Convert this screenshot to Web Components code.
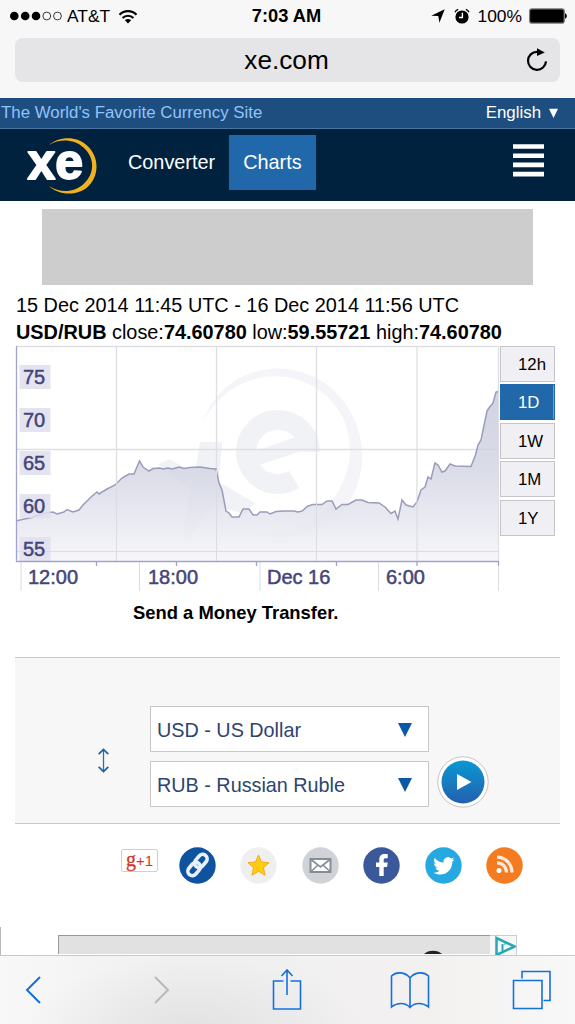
<!DOCTYPE html>
<html lang="en">
<head>
<meta charset="utf-8">
<title>xe.com</title>
<style>
  html, body {
    margin: 0;
    height: 100%;
  }

  body {
    --navy: #01223f;
    --blue: #2068a9;
    --ios-blue: #1670dc;
    display: flex;
    flex-direction: column;
    height: 1024px;
    overflow: hidden;
    background: #fff;
    color: #000;
    font-family: "Liberation Sans", Arial, sans-serif;
  }

  main {
    flex: 1;
    min-height: 0;
    overflow: hidden;
  }
</style>
</head>
<body>
<phone-status></phone-status>
<address-bar>xe.com</address-bar>
<site-header></site-header>
<main>
  <rate-summary></rate-summary>
  <rate-chart></rate-chart>
  <transfer-link>Send a Money Transfer.</transfer-link>
  <currency-form>
    <currency-select>USD - US Dollar</currency-select>
    <currency-select>RUB - Russian Ruble</currency-select>
  </currency-form>
  <share-row></share-row>
  <bottom-ad></bottom-ad>
</main>
<phone-toolbar></phone-toolbar>

<script>
class BaseElement extends HTMLElement {
  constructor() {
    super();
    this.attachShadow({ mode: "open" });
  }

  connectedCallback() {
    this.shadowRoot.innerHTML = this.render();
  }
}

class PhoneStatus extends BaseElement {
  render() {
    return `
      <style>
        :host {
          display: grid;
          grid-template-columns: 1fr auto 1fr;
          align-items: center;
          height: 32px;
          flex: none;
          padding: 0 8px 0 10px;
          background: #f7f7f7;
          font-size: 17.4px;
          white-space: nowrap;
        }
        div { display: flex; align-items: center; }
        .right { justify-content: flex-end; }
        .carrier { margin: 0 8px 0 5px; }
        .time { padding-right: 4px; font-size: 18.3px; font-weight: bold; }
        .level { margin: 0 7px 0 8px; }
        .clock { margin-left: 9px; }
        svg { display: block; }
      </style>
      <div>
        <svg width="52" height="10" viewBox="0 0 52 10">
          <circle cx="4.3" cy="5" r="4.3"/><circle cx="15.2" cy="5" r="4.3"/><circle cx="26" cy="5" r="4.3"/>
          <g fill="none" stroke="#222" stroke-width=".9"><circle cx="36.8" cy="5" r="3.9"/><circle cx="47.5" cy="5" r="3.9"/></g>
        </svg>
        <span class="carrier">AT&amp;T</span>
        <svg width="20" height="15" viewBox="0 0 20 15">
          <g fill="none" stroke="#000" stroke-width="2.2"><path d="M1.5 5.7a12 12 0 0 1 17 0"/><path d="M4.6 9a7.6 7.6 0 0 1 10.8 0"/></g>
          <path d="M10 14.4 6.9 11.2a4.4 4.4 0 0 1 6.2 0z"/>
        </svg>
      </div>
      <div class="time">7:03 AM</div>
      <div class="right">
        <svg width="14" height="14" viewBox="0 0 14 14"><path d="M13.7.3 8.4 13.7 7.3 7 .2 6.7z"/></svg>
        <svg class="clock" width="16" height="16" viewBox="0 0 16 16">
          <circle cx="8" cy="9" r="6.6"/>
          <path d="M1 4.3A5 5 0 0 1 4.2 1.3M15 4.3a5 5 0 0 0-3.2-3" fill="none" stroke="#000" stroke-width="1.3"/>
          <path d="M8.4 4.8v4.7H5" fill="none" stroke="#fff" stroke-width="1.4"/>
        </svg>
        <span class="level">100%</span>
        <svg width="38" height="16" viewBox="0 0 38 16">
          <rect x=".6" y=".9" width="34.6" height="14.2" rx="2.2" fill="#000" stroke="#777" stroke-width="1.2"/>
          <path d="M36 5.2c2.4.8 2.4 4.8 0 5.6z"/>
        </svg>
      </div>
    `;
  }
}

class AddressBar extends BaseElement {
  render() {
    return `
      <style>
        :host {
          display: block;
          height: 66px;
          flex: none;
          box-sizing: border-box;
          padding: 6px 15px 0;
          background: #f7f7f7;
        }
        .field {
          display: grid;
          grid-template-columns: 1fr auto 1fr;
          align-items: center;
          height: 44px;
          border-radius: 8px;
          background: #e5e5e7;
          font-size: 26.2px;
        }
        .url { grid-column: 2; padding-right: 2px; }
        svg { justify-self: end; margin-right: 12px; }
      </style>
      <div class="field">
        <span class="url"><slot></slot></span>
        <svg width="22" height="24" viewBox="0 0 22 24">
          <path d="M12.5 3.8H11A9 9 0 1 0 20 13.4" fill="none" stroke="#000" stroke-width="2.2"/>
          <path d="M11 .2 18.8 4.4 11 8z"/>
        </svg>
      </div>
    `;
  }
}

class SiteHeader extends BaseElement {
  render() {
    return `
      <style>
        :host { display: block; flex: none; color: #fff; }
        .tagline {
          display: flex;
          justify-content: space-between;
          align-items: center;
          height: 30px;
          padding: 0 17px 0 1px;
          border-bottom: 1px solid #4a75a0;
          background: #1e4e80;
          font-size: 16.85px;
        }
        .tagline > span:first-child { color: #8fc3fa; }
        .lang { display: flex; align-items: center; gap: 8px; }
        nav {
          display: flex;
          align-items: center;
          height: 72px;
          padding-right: 30px;
          background: var(--navy);
          font-size: 19.85px;
        }
        a { display: flex; align-items: center; height: 55px; padding: 0 14px; margin-bottom: 6px; }
        a.on { background: var(--blue); }
        .logo { width: 114px; height: 72px; overflow: visible; }
        .menu { margin: 0 1px 9px auto; }
      </style>
      <div class="tagline">
        <span>The World's Favorite Currency Site</span>
        <span class="lang">English
          <svg width="9" height="10" viewBox="0 0 9 10"><path d="M0 .8h9L4.5 10z" fill="#fff"/></svg>
        </span>
      </div>
      <nav>
        <svg class="logo" viewBox="0 0 114 72">
          <path d="M49 16C58 8 76 6 87 16.500C100 28 99.500 48 87 58.500C76 67.500 58 66 49 57C60 64 74 64 83.500 55C95 45 95 29 84 19C74 10 60 9.500 49 16Z" fill="#f0b31f"/>
          <text x="27.500" y="49.500" font-family="Liberation Sans, Arial, sans-serif" font-weight="bold" font-size="50" fill="#fff" stroke="#fff" stroke-width="1.800" stroke-linejoin="round">xe</text>
        </svg>
        <a>Converter</a>
        <a class="on">Charts</a>
        <svg class="menu" width="31" height="33" viewBox="0 0 31 33"><path d="M0 2.500h31M0 11.700h31M0 20.900h31M0 30.100h31" stroke="#fff" stroke-width="4.600"/></svg>
      </nav>
    `;
  }
}

class RateSummary extends BaseElement {
  render() {
    return `
      <style>
        :host { display: block; font-size: 19.88px; line-height: 27px; white-space: nowrap; }
        .banner { height: 76px; margin: 8px 42px 7px; background: #cdcdcd; }
        p { margin: 0 0 0 16px; }
        p:last-child { line-height: 26px; }
      </style>
      <div class="banner"></div>
      <p>15 Dec 2014 11:45 UTC - 16 Dec 2014 11:56 UTC</p>
      <p><b>USD/RUB</b> close:<b>74.60780</b> low:<b>59.55721</b> high:<b>74.60780</b></p>
    `;
  }
}

class RangePicker extends BaseElement {
  render() {
    const ranges = ["12h", "1D", "1W", "1M", "1Y"];
    return `
      <style>
        :host { display: flex; flex-direction: column; gap: 2.4px; width: 55px; }
        span {
          box-sizing: border-box;
          height: 36px;
          padding-left: 17px;
          border: 1px solid #c5c5ca;
          background: #f0f0f4;
          font-size: 16.8px;
          line-height: 36px;
        }
        .on { border-color: var(--blue); background: var(--blue); color: #fff; box-shadow: inset -1px 0 #6f9fcb; }
      </style>
      ${ranges.map((r) => `<span class="${r === "1D" ? "on" : ""}">${r}</span>`).join("")}
    `;
  }
}

class RateChart extends BaseElement {
  render() {
    const line = `16,521 22,519.500 32,517.500 38,515 45,513 53,512 57,514 64,512 67,509.500 73,512 79,510 83,505
      86,502 91,497 97,492 99,494 107,489 115,485 122,478 129,474 134,474 139.500,461 143,467 149,471 153,468.500
      160,468 163,469 168,468 172,469 179,467 184,468.500 190,467.500 200,467 210,468.500 216,469 219,483 222,490
      226,511 229,513 232,517 239,517 243,509 249,509 253,515 257,515 260,512 267,512 270,514 276,511.500 285,511
      294,511 298,512 302,511 308,506 313,504.500 322,504.500 327,501 332,501 336,509 342,504.500 348,504.500
      356,500 362,500 368,502.500 379,503 385,507 391,513.500 395,511 398,519 402,500 406,505 413,507 417,502
      421,490 425,487 428,477 431,479 435,463 438,465 442,472 445,471 450,464 455,466 471,466.500 475.500,455
      478,445 481,440 487,411 489,408 493,403 496,392 498,391.500`;
    const values = [75, 70, 65, 60, 55];
    const times = [[28, "12:00"], [148, "18:00"], [267, "Dec 16"], [386, "6:00"]];
    return `
      <style>
        :host { display: flex; height: 247px; }
        svg { display: block; flex: none; }
        range-picker { margin-top: 1px; }
      </style>
      <svg width="500" height="247" viewBox="0 345 500 247" font-size="20">
        <defs>
          <linearGradient id="area" gradientUnits="userSpaceOnUse" x1="0" y1="391" x2="0" y2="561">
            <stop offset="0" stop-color="#c6c8dc" stop-opacity=".8"/>
            <stop offset=".48" stop-color="#d2d4e2" stop-opacity=".8"/>
            <stop offset="1" stop-color="#f4f4f9" stop-opacity=".8"/>
          </linearGradient>
        </defs>
        <!-- watermark -->
        <g fill="#f1f2f6">
          <path d="M203 422C220 372 280 352 326 384C374 420 374 492 328 523C305 539 275 540 250 533C290 537 322 522 339 490C360 452 350 410 316 388C276 364 226 378 203 422Z" fill="#f5f5f9"/>
          <path d="M200 442h22l-3 40 36 21-11 11-30-9-26 34-5-2 7-48-32-25 11-5 26 14z"/>
          <circle cx="278" cy="452" r="32" fill="none" stroke="#f1f2f6" stroke-width="20" stroke-dasharray="168 34" stroke-dashoffset="-33"/>
          <path d="M240 456 317 430v16l-70 23z"/>
        </g>
        <path d="M116.500 346V561M216.500 346V561M316.500 346V561M417 346V561M498.500 346V561M16 346.500H499M16 449.500H499M16 551.500H499" stroke="#dfdfe3" fill="none" stroke-width="1.300"/>
        <polygon points="${line} 498,561 16,561" fill="url(#area)"/>
        <polyline points="${line}" fill="none" stroke="#9a9cbb" stroke-width="1.500"/>
        <g fill="#dfdfee" fill-opacity=".85">${values.map((v, i) => `<rect x="19.500" y="${365 + i * 43}" width="31" height="24"/>`).join("")}</g>
        <path d="M116.500 470V561M216.500 470V561M316.500 500V561M417 500V561M16 551.500H499" stroke="#dcdce4" fill="none"/>
        <path d="M21 562v29M139.500 562v29M260 562v29M378.500 562v29M498.500 562v29" stroke="#dcdce3" fill="none"/>
        <path d="M16.500 346V561.500H499M96.500 561v5M176.500 561v5M256.500 561v5M336.500 561v5M417 561v5M498.500 561v5" stroke="#a2a3c9" fill="none" stroke-width="1.300"/>
        <g fill="#45457a" stroke="#45457a" stroke-width=".5">
          ${values.map((v, i) => `<text x="23" y="${384 + i * 43}">${v}</text>`).join("")}
          ${times.map(([x, t]) => `<text x="${x}" y="583.500">${t}</text>`).join("")}
        </g>
      </svg>
      <range-picker></range-picker>
    `;
  }
}

class TransferLink extends BaseElement {
  render() {
    return `
      <style>
        :host { display: block; height: 65px; padding-left: 133px; font-size: 18.4px; font-weight: bold; line-height: 41px; box-sizing: border-box; }
      </style>
      <slot></slot>
    `;
  }
}

class CurrencySelect extends BaseElement {
  render() {
    return `
      <style>
        :host {
          display: flex;
          align-items: center;
          justify-content: space-between;
          box-sizing: border-box;
          width: 279px;
          height: 46px;
          padding: 2px 16px 0 6px;
          border: 1.5px solid #c8c8c8;
          background: #fff;
          color: #2c4470;
          font-size: 19.8px;
        }
      </style>
      <slot></slot>
      <svg width="14" height="14" viewBox="0 0 14 14"><path d="M0 0h14L7 14z" fill="#0b57a8"/></svg>
    `;
  }
}

class CurrencyForm extends BaseElement {
  render() {
    return `
      <style>
        :host {
          display: flex;
          box-sizing: border-box;
          height: 167px;
          margin: 0 15px;
          padding-top: 48px;
          border: solid #c9c9c9;
          border-width: 1px 0;
          background: #f7f7f7;
        }
        .swap { margin: 42px 41px 0 83px; flex: none; }
        .fields { display: flex; flex-direction: column; gap: 9px; }
        .go { margin: 50px 0 0 8px; flex: none; }
      </style>
      <svg class="swap" width="11" height="25" viewBox="0 0 11 25">
        <path d="M5.500 2v21" stroke="#2a70b0" stroke-width="1.300"/>
        <path d="M.7 6.200 5.500 1.500l4.800 4.700M.7 18.800l4.800 4.700 4.800-4.700" fill="none" stroke="#1763a9" stroke-width="1.700"/>
      </svg>
      <div class="fields"><slot></slot></div>
      <svg class="go" width="52" height="52" viewBox="0 0 52 52">
        <defs><linearGradient id="go" x2="0" y2="1"><stop stop-color="#0b98d3"/><stop offset="1" stop-color="#2360ae"/></linearGradient></defs>
        <circle cx="26" cy="26" r="25.200" fill="#fff" stroke="#c9c4c2"/>
        <circle cx="26" cy="26" r="21.500" fill="url(#go)"/>
        <path d="M20 18v16l14.500-8z" fill="#fff"/>
      </svg>
    `;
  }
}

class ShareRow extends BaseElement {
  render() {
    const icons = [
      // link
      ["#0f52a0", `<g fill="none" stroke="#e8f0fb" stroke-width="3.600" transform="rotate(-50 18.500 18)"><rect x="6" y="13.500" width="14.500" height="9" rx="4.500"/><rect x="16.500" y="13.500" width="14.500" height="9" rx="4.500"/></g>`],
      // favourite
      ["#efefef", `<path d="M18.500 8l3 7 7.500.7-5.600 5.100 1.700 7.400-6.600-3.900-6.600 3.900 1.700-7.400L8 15.700l7.500-.7z" fill="#fc1" stroke="#efab18"/>`],
      // mail
      ["#cfd2d6", `<rect x="8.500" y="12" width="20" height="13" fill="#fff" stroke="#858d97" stroke-width="2"/><path d="M9 12.500l9.500 7.500 9.500-7.500M9 24.500l7-6.500M28 24.500L21 18" fill="none" stroke="#858d97" stroke-width="1.600"/>`],
      // facebook
      ["#3b589a", `<path d="M16.300 29V20H13v-4.400h3.300v-3c0-4 2.200-5.700 5.400-5.700h3v4.300h-2.100c-1.500 0-1.900.7-1.900 2v2.400h4l-.6 4.400h-3.400v9z" fill="#fff"/>`],
      // twitter
      ["#26a9e1", `<path d="M29.500 12.200c-.8.500-1.600.7-2.500.8.800-.6 1.500-1.400 1.800-2.400-.9.500-1.700.8-2.600 1a4.400 4.400 0 0 0-7.500 4c-3.700-.2-6.900-2-9-4.700-1.200 2-.6 4.600 1.300 5.900-.7 0-1.400-.2-2-.6 0 2.200 1.500 4 3.500 4.400-.6.200-1.300.2-2 .1.600 1.800 2.200 3 4.100 3-1.800 1.500-4 2.100-6.400 1.900 8.900 5.300 19.200-.4 19.100-10.800.8-.6 1.600-1.500 2.200-2.600z" fill="#fff"/>`],
      // rss
      ["#f47b20", `<circle cx="13" cy="23.500" r="2.500" fill="#fff"/><path d="M11 15.800c5.400 0 9.500 4 9.500 9.700M11 10.200c8.300 0 15 6.600 15 15.300" fill="none" stroke="#ffe9dc" stroke-width="3.200"/>`]
    ];
    return `
      <style>
        :host { display: flex; align-items: center; height: 37px; margin-top: 22.5px; padding-left: 121px; }
        .plus {
          box-sizing: border-box;
          width: 37px;
          height: 23px;
          margin: 0 21px 9px 0;
          border: 1px solid #cfcfcf;
          border-radius: 2px;
          color: #d03a2c;
          font: 15px/19px "Liberation Sans", sans-serif;
          text-align: center;
        }
        .plus b { font: 20px/18px "Liberation Serif", serif; -webkit-text-stroke: .3px; }
        svg { display: block; flex: none; margin-right: 24.400px; }
      </style>
      <span class="plus"><b>g</b>+1</span>
      ${icons.map(([fill, art]) => `<svg width="37" height="37" viewBox="0 0 37 37"><circle cx="18.500" cy="18.500" r="18.200" fill="${fill}"/>${art}</svg>`).join("")}
    `;
  }
}

class BottomAd extends BaseElement {
  render() {
    return `
      <style>
        :host { display: flex; height: 29px; margin-top: 43.5px; }
        .edge { width: 57px; border-left: 1px solid #bbb; }
        .ad {
          display: flex;
          justify-content: flex-end;
          align-items: flex-end;
          width: 431px;
          height: 18px;
          margin-top: 8px;
          border: solid #999;
          border-width: 1.5px 0 0 1.5px;
          background: #e1e1e1;
        }
        .head { margin-right: 48px; }
        .choices { margin-top: 8px; height: 21px; background: #f7f7f7; border: solid #ccc; border-width: 1px 1px 0 0; }
        svg { display: block; }
      </style>
      <div class="edge"></div>
      <div class="ad"><svg class="head" width="18" height="4" viewBox="0 0 18 4"><path d="M0 4C4-.5 14-.5 18 4z" fill="#222"/></svg></div>
      <div class="choices">
        <svg width="26" height="21" viewBox="0 0 26 21"><path d="M6.500 2v17L24.500 10.500z" fill="none" stroke="#25a9b5" stroke-width="2.500"/><path d="M12.500 8v7M15 7.500v1" stroke="#25a9b5" stroke-width="2"/></svg>
      </div>
    `;
  }
}

class PhoneToolbar extends BaseElement {
  render() {
    return `
      <style>
        :host {
          display: flex;
          flex: none;
          align-items: center;
          box-sizing: border-box;
          height: 69px;
          padding-left: 25px;
          border-top: 1.500px solid #c9c9c9;
          background:
            radial-gradient(ellipse 170px 75px at 195px 75px, #e2e2e2, transparent),
            linear-gradient(90deg, #f8f8f8, #f0f0f0 30%, #f3f1f0 75%, #f8f8f8);
        }
        svg { display: block; flex: none; fill: none; stroke: var(--ios-blue); stroke-width: 1.600; }
        .off { margin-left: 113px; stroke: #b9b9b9; }
        .share { margin: 0 88px 2px 102px; }
        .tabs { margin-left: 82px; }
      </style>
      <svg width="16" height="28" viewBox="0 0 16 28"><path d="M15 1 2 14l13 13" stroke-width="2"/></svg>
      <svg class="off" width="16" height="28" viewBox="0 0 16 28"><path d="M1 1l13 13L1 27" stroke-width="2"/></svg>
      <svg class="share" width="30" height="42" viewBox="0 0 30 42"><path d="M11.500 13H1.500V41H28.500V13H18.500M15 27V2M9.500 8 15 2l5.500 6"/></svg>
      <svg width="40" height="38" viewBox="0 0 40 38"><path d="M20 7C15 .5 6 .5 1.500 5v31C7 31.500 15 31 20 36.500 25 31 33 31.500 38.500 36V5C34 .5 25 .5 20 7zV36.500"/></svg>
      <svg class="tabs" width="39" height="40" viewBox="0 0 39 40"><path d="M1.500 10.500h28.500v28H1.500zM10 8.500V1.500h28v29h-6.500"/></svg>
    `;
  }
}

customElements.define("phone-status", PhoneStatus);
customElements.define("address-bar", AddressBar);
customElements.define("site-header", SiteHeader);
customElements.define("rate-summary", RateSummary);
customElements.define("range-picker", RangePicker);
customElements.define("rate-chart", RateChart);
customElements.define("transfer-link", TransferLink);
customElements.define("currency-select", CurrencySelect);
customElements.define("currency-form", CurrencyForm);
customElements.define("share-row", ShareRow);
customElements.define("bottom-ad", BottomAd);
customElements.define("phone-toolbar", PhoneToolbar);
</script>
</body>
</html>
